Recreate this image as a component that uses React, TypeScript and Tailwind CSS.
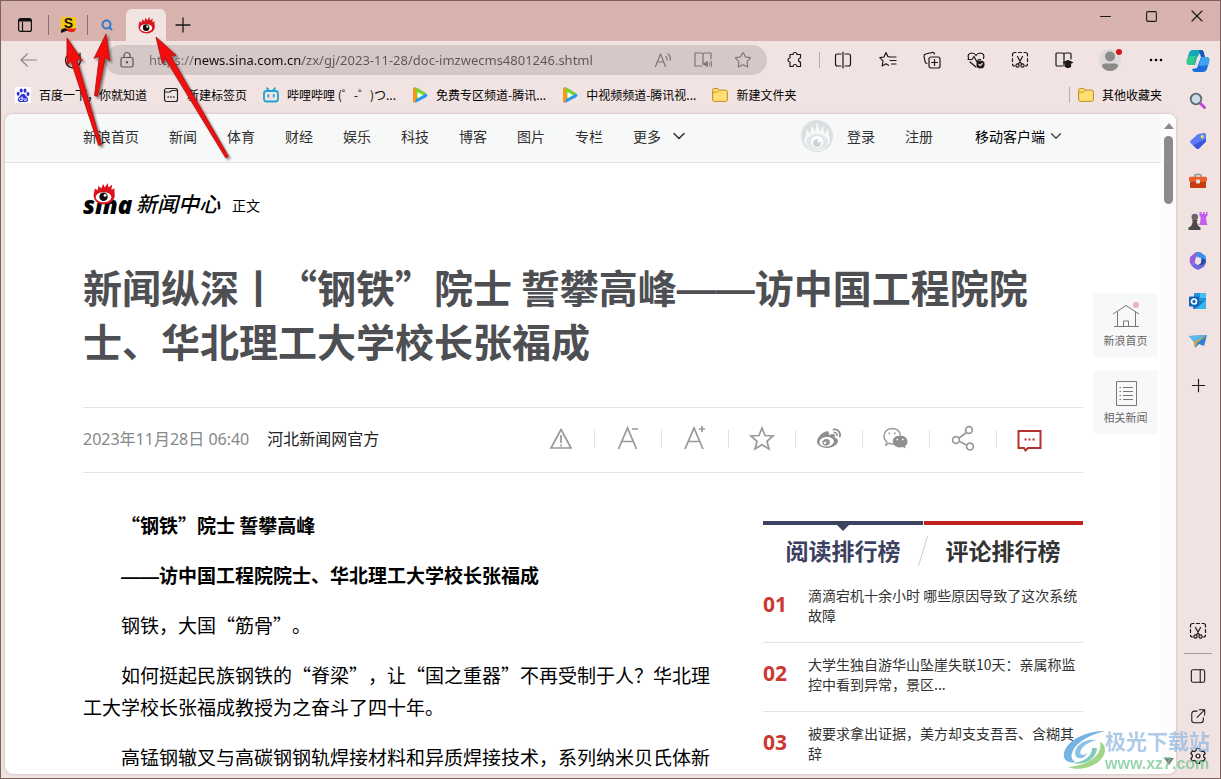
import type { ReactNode } from 'react';
import { ChevronDown, Minus, Plus, Search, Square, Star, X } from 'lucide-react';
import { FaWeibo } from 'react-icons/fa';

const NAV_ITEMS = ['新浪首页', '新闻', '体育', '财经', '娱乐', '科技', '博客', '图片', '专栏'];

const RANKING = [
  { no: '01', title: '滴滴宕机十余小时 哪些原因导致了这次系统故障' },
  { no: '02', title: '大学生独自游华山坠崖失联10天：亲属称监控中看到异常，景区...' },
  { no: '03', title: '被要求拿出证据，美方却支支吾吾、含糊其辞' },
];

const ARROWS = [
  { from: [99, 144], to: [66, 37] },
  { from: [95, 95], to: [105, 33] },
  { from: [226, 156], to: [155, 36] },
];

/* ---------- icons ---------- */

function LineIcon({ children, size = 18 }: { children: ReactNode; size?: number }) {
  return (
    <svg width={size} height={size} viewBox="0 0 18 18" fill="none" stroke="currentColor" strokeWidth="1.2" strokeLinecap="round" strokeLinejoin="round" className="shrink-0">
      {children}
    </svg>
  );
}

function SinaEye({ size = 18 }: { size?: number }) {
  return (
    <svg width={size} height={size} viewBox="0 0 24 24" className="shrink-0">
      <path d="M1 16C0 11 2 9 2 6L5 8L6 3L9 6L11 1L13 5L16 0L17 5L21 2L20 7L24 6C22 9 25 12 23 17C20 25 4 26 1 16Z" fill="#d9141e" />
      <ellipse cx="11.500" cy="15.500" rx="8.500" ry="5.600" fill="#fff" />
      <circle cx="11.500" cy="15" r="4.600" fill="#120c0c" />
      <circle cx="13.200" cy="13.500" r="1.600" fill="#fff" />
    </svg>
  );
}

function LockIcon() {
  return (
    <LineIcon>
      <rect x="3" y="6.500" width="12" height="9.500" rx="1.500" />
      <path d="M6 6.500V4.500a3 3 0 0 1 6 0v2" />
      <circle cx="9" cy="11.300" r="0.600" fill="currentColor" />
    </LineIcon>
  );
}

function ScreenshotIcon() {
  return (
    <LineIcon>
      <path d="M1.500 5V3.500a2 2 0 0 1 2-2H5M7.500 1.500h3M13 1.500h1.500a2 2 0 0 1 2 2V5M1.500 7.500v3M16.500 7.500v3M1.500 13a2 2 0 0 0 2 2M16.500 13a2 2 0 0 1-2 2" />
      <path d="M6.500 5.500 10.500 13M11.500 5.500 7.500 13" />
      <circle cx="6.500" cy="14.500" r="1.600" />
      <circle cx="11.500" cy="14.500" r="1.600" />
    </LineIcon>
  );
}

function FolderIcon() {
  return (
    <svg width="16" height="16" viewBox="0 0 16 16" className="shrink-0">
      <path d="M.6 3.500a2 2 0 0 1 2-2h3l1.800 1.600h6a2 2 0 0 1 2 2v7.300a2 2 0 0 1-2 2H2.600a2 2 0 0 1-2-2z" fill="#ffdf73" stroke="#b98a1c" />
      <path d="M.8 5.200h4.400l2-2" fill="none" stroke="#c99a26" />
    </svg>
  );
}

function VideoIcon() {
  return (
    <svg width="16" height="16" viewBox="0 0 16 16" className="shrink-0">
      <path d="M1 2C1 .5 3 0 5 1L14 6.500C16 8 16 9 14 10.200L5 15C3 16 1 15.500 1 14Z" fill="#2a97f0" />
      <path d="M1 2C1 .5 3 0 5 1L12 5.300 5.500 8 3 15.600C1.800 15.600 1 15 1 14Z" fill="#ff9416" />
      <path d="M3 .5Q4 .4 5 1L14 6.500 10 9 5 12 4 5Z" fill="#7bd52b" />
      <path d="M5.500 5 11 8.200 5.500 11.300Z" fill="#fff" />
    </svg>
  );
}

function BaiduIcon() {
  return (
    <svg width="16" height="16" viewBox="0 0 16 16" className="shrink-0">
      <rect width="16" height="16" rx="1" fill="#fff" />
      <g fill="#2c2fd8">
        <ellipse cx="3.200" cy="6.800" rx="1.500" ry="2" />
        <ellipse cx="6.200" cy="3.600" rx="1.500" ry="2.100" />
        <ellipse cx="10" cy="3.700" rx="1.500" ry="2.100" />
        <ellipse cx="13" cy="7" rx="1.500" ry="2" />
        <path d="M8 6.800c2 0 2.400 2 4 3.400 2 1.800 1.200 4.600-1 4.800H5c-2.400-.2-3-3-1-4.800C5.600 8.800 6 6.800 8 6.800Z" />
      </g>
      <path d="M7.200 9.500v4H5.600a1.200 1.200 0 0 1 0-2.500h1.600M9 11v1.500q0 1 1 1h1.200V11" fill="none" stroke="#fff" strokeWidth="0.900" />
    </svg>
  );
}

function BilibiliIcon() {
  return (
    <svg width="16" height="16" viewBox="0 0 16 16" fill="none" stroke="#22a3cf" strokeWidth="1.800" strokeLinecap="round" className="shrink-0">
      <rect x="1" y="4" width="14" height="10.500" rx="2.500" />
      <path d="M4 1.200 6 3.500M12 1.200 10 3.500M5.300 8v1.600M10.700 8v1.600" />
    </svg>
  );
}

function NewTabIcon() {
  return (
    <svg width="16" height="16" viewBox="0 0 16 16" fill="none" stroke="#222" strokeWidth="1.200" className="shrink-0">
      <rect x="1.500" y="1.500" width="13" height="13" rx="2" />
      <path d="M2 5h5l1.500-1.500H14" />
      <path d="M4.500 10h1.400M7.300 10h1.400M10.100 10h1.400" strokeWidth="1.400" />
    </svg>
  );
}

function CopilotIcon() {
  return (
    <svg width="24" height="24" viewBox="0 0 24 24" className="shrink-0">
      <path d="M7 1h8c2 0 2.600 1.500 3 3l-5 1-4 11H4c-3 0-4-2-3-5l2-7C3.700 2 5 1 7 1Z" fill="#15a7b5" />
      <path d="M1 11c.5-3 2-4 4-4h5L8 16H4c-3 0-4-2-3-5Z" fill="#35c98e" />
      <path d="M17 23H9c-2 0-2.600-1.500-3-3l5-1 4-11h5c3 0 4 2 3 5l-2 7c-.7 2-2 3-4 3Z" fill="#1d6fe0" />
      <path d="M15 8h5c3 0 4 2 3 5l-1 3c-2 0-5 1-9 1Z" fill="#3fa2ee" />
      <path d="M15 1c2 0 2.600 1.500 3 3l1 4h-4L13 1Z" fill="#1554b8" />
      <path d="m11 8 3-1-3 10H9Z" fill="#efe2e1" />
    </svg>
  );
}

function SideSearchIcon() {
  return (
    <svg width="18" height="18" viewBox="0 0 18 18" fill="none">
      <path d="m10.500 10.500 5 5" stroke="#bb4bdd" strokeWidth="3" strokeLinecap="round" />
      <circle cx="7" cy="7" r="5.300" fill="#c9dbe8" stroke="#616a73" strokeWidth="1.800" />
    </svg>
  );
}

function TagIcon() {
  return (
    <svg width="18" height="18" viewBox="0 0 18 18">
      <path d="M9 2 15.500 1Q17 1 17 3V9.500L10 16.500Q8.700 17.500 7.500 16.500L1.500 11Q.5 9.800 1.500 8.700Z" fill="#5b7cf5" />
      <path d="M17 7v2.500L10 16.500Q8.700 17.500 7.500 16.500L4 13.300Z" fill="#3c55dd" />
      <circle cx="13.300" cy="4.800" r="1.700" fill="#d9e26a" />
    </svg>
  );
}

function ToolboxIcon() {
  return (
    <svg width="18" height="18" viewBox="0 0 18 18">
      <path d="M6 5V3.500Q6 2.500 7 2.500h4q1 0 1 1V5" fill="none" stroke="#84909a" strokeWidth="1.400" />
      <rect x="1" y="8" width="16" height="8" rx="1" fill="#c53c11" />
      <rect x="0" y="4.800" width="18" height="5" rx="1.200" fill="#e8602b" />
      <rect x="7" y="7.500" width="4" height="4" rx="1" fill="#dfe3e6" />
    </svg>
  );
}

function ChessIcon() {
  return (
    <svg width="20" height="20" viewBox="0 0 20 20">
      <path d="M11.500 1h2v2h1.500V1h1.500v2H18V1h1.500v4l-1.500 1 .6 6 1 2h-9l1.500-2 .6-6-1.200-1Z" fill="#c45cf0" />
      <circle cx="6.800" cy="6" r="3.300" fill="#6a6668" />
      <path d="M4 9h5.500l-.8 2 1.600 4 2.200 1.500V19h-12v-2.500L3.200 15l1.600-4Z" fill="#4d494b" />
    </svg>
  );
}

function M365Icon() {
  return (
    <svg width="18" height="18" viewBox="0 0 18 18">
      <path d="M7 0 12 0 8 3 7 6 6 11 2 13Q0 11 1 5Z" fill="#9a5fe0" />
      <path d="M7 0h4l5 3.500Q18 6 16.500 11L13 13l-1-7-4-1Z" fill="#3f8fe8" />
      <path d="M2 13 6 11 9 13 16.500 9.500Q17 13 14 15.500L9 18Q5 17 2 13Z" fill="#7067dc" />
      <path d="m13 6 3.600 2v3L13 13 9 13l3-3Z" fill="#284ba4" />
      <path d="M6.500 6.500 9 5.500l3 1.500v4l-3 2-3-2Z" fill="#efe2e1" />
    </svg>
  );
}

function OutlookIcon() {
  return (
    <svg width="18" height="18" viewBox="0 0 18 18">
      <rect x="5" y="1" width="12" height="11" rx="1" fill="#2493df" />
      <path d="M11 1h6v5h-6Z" fill="#45bdf0" />
      <path d="m4 9 13 0v7q0 1-1 1H5q-1 0-1-1Z" fill="#1278c8" />
      <path d="M17 8v8q0 1-1 1H6Z" fill="#38b5ee" />
      <rect x="0" y="4.500" width="10" height="10" rx="1" fill="#0f64b8" />
      <circle cx="5" cy="9.500" r="2.500" fill="none" stroke="#fff" strokeWidth="1.700" />
    </svg>
  );
}

function PlaneIcon() {
  return (
    <svg width="18" height="18" viewBox="0 0 18 18">
      <path d="M0 4 18 3 15 14 10 12 6 16 5 10Z" fill="#2e83d8" />
      <path d="M0 4 18 3 5 10Z" fill="#5cb8ec" />
      <path d="M18 3 5 10 6 16 8 11Z" fill="#d8a928" />
    </svg>
  );
}

function WatermarkSwirl() {
  return (
    <svg width="42" height="40" viewBox="0 0 42 40" fill="none" className="shrink-0">
      <path d="M42 1C25 1 9 8 3 18C-3 28 4 34 13 32C7 30 7 23 13 16C19 9 30 4 42 1Z" fill="#3a93d6" />
      <path d="M33 10C22 8 12 16 12 23C12 30 22 30 24 23C19 27 16 24 18 20C21 14 28 12 33 10Z" fill="#5aa9dd" />
      <path d="M37 12C40 24 27 35 5 37C20 43 42 33 42 20C42 16 40 13 37 12Z" fill="#7cc35a" />
      <path d="M29 18C29 27 20 32 10 33C22 36 34 28 34 18Z" fill="#4fb5a2" />
    </svg>
  );
}

/* ---------- browser chrome ---------- */

function IconButton({ label, className = 'w-11', children }: { label: string; className?: string; children: ReactNode }) {
  return (
    <button type="button" aria-label={label} className={`flex shrink-0 items-center justify-center ${className}`}>
      {children}
    </button>
  );
}

function TitleBar() {
  return (
    <div className="flex h-10 shrink-0 bg-[#d8b2ac]">
      <div className="flex items-end">
        <IconButton label="Tab actions" className="h-8 w-[47px]">
          <svg width="14" height="14" viewBox="0 0 14 14" fill="none" stroke="#111" strokeWidth="1.200">
            <rect x="0.600" y="0.600" width="12.800" height="12.800" rx="2" />
            <path d="M1 3h12M4.500 4v9" />
            <path d="M1 2h12" strokeWidth="2" />
          </svg>
        </IconButton>
        <span className="mb-1.5 h-5 w-px bg-[#8d6b67]" />
        <button type="button" aria-label="Sogou" className="flex h-8 w-[38px] items-center justify-center">
          <svg width="17" height="18" viewBox="0 0 17 18">
            <rect x="1" y="1" width="15" height="14" fill="#f9c80e" />
            <text x="8.500" y="12" textAnchor="middle" fontSize="14" fontWeight="700" fontFamily="Liberation Sans, sans-serif" fill="#111">S</text>
            <path d="M1 14C4 11 8 12 9 15L6 15 1 17Z" fill="#111" />
            <path d="M6 13C10 11 12 14 16 12C16 17 9 18 6 13Z" fill="#e4231b" />
          </svg>
        </button>
        <span className="mb-1.5 h-5 w-px bg-[#8d6b67]" />
        <button type="button" aria-label="Search" className="flex h-8 w-[38px] items-center justify-center">
          <Search size={12} strokeWidth={4} color="#2e7bd0" />
        </button>
        <button type="button" aria-label="Sina" className="flex h-8 w-10 items-center justify-center rounded-t-md bg-[#f1e3e2]">
          <SinaEye size={17} />
        </button>
        <IconButton label="New tab" className="h-8 w-[34px]">
          <Plus size={24} strokeWidth={1.300} />
        </IconButton>
      </div>
      <div className="ml-auto flex h-[30px]">
        <IconButton label="Minimize" className="w-[46px]"><Minus size={17} strokeWidth={1.500} /></IconButton>
        <IconButton label="Maximize" className="w-[46px]"><Square size={13} strokeWidth={2} /></IconButton>
        <IconButton label="Close" className="w-[46px]"><X size={20} strokeWidth={1.400} /></IconButton>
      </div>
    </div>
  );
}

function AddressRow() {
  return (
    <div className="flex h-[38px] items-center">
      <IconButton label="Back" className="w-[54px]">
        <svg width="17" height="14" viewBox="0 0 17 14" fill="none" stroke="#8f8787" strokeWidth="1.200" strokeLinecap="round" strokeLinejoin="round">
          <path d="M16.500 7H1M7.500.8 1 7l6.500 6.200" />
        </svg>
      </IconButton>
      <IconButton label="Refresh" className="w-9">
        <LineIcon>
          <path d="M16 6.500A7.500 7.500 0 1 0 16.500 10M16 2v4.500h-4.500" />
        </LineIcon>
      </IconButton>
      <div className="ml-[14px] flex h-[30px] min-w-0 flex-1 items-center rounded-full bg-[#d6c8c7] text-[#7d7474]">
        <IconButton label="Site information" className="w-11 text-[#5e5656]"><LockIcon /></IconButton>
        <input
          type="text"
          aria-label="Address"
          defaultValue="https://news.sina.com.cn/zx/gj/2023-11-28/doc-imzwecms4801246.shtml"
          className="min-w-0 flex-1 bg-[linear-gradient(90deg,#6f6767_46px,#151010_46px,#151010_153px,#5d5555_153px)] bg-clip-text pt-0.5 font-['Noto_Sans'] text-[13px] text-transparent outline-none"
        />
        <IconButton label="Read aloud" className="w-10">
          <LineIcon>
            <path d="M1.500 15.500 6.500 3l5 12.500M3.300 11h6.400M12 5.500q1.500 1.500 1 3.500M14 3q3 2.500 2.200 6" />
          </LineIcon>
        </IconButton>
        <IconButton label="Immersive reader" className="w-10">
          <LineIcon>
            <path d="M9 3.500V13M9 3.500Q9 2 7.500 2H1v13h7M9 3.500Q9 2 10.500 2H17v6" />
            <path d="M10 12h1.500l2-2v6l-2-2H10ZM15.500 11.500q1 1.500 0 3M17 10q1.500 3 0 6" fill="currentColor" strokeWidth="0.800" />
          </LineIcon>
        </IconButton>
        <IconButton label="Add to favorites" className="mr-1 w-10"><Star size={18} strokeWidth={1.500} /></IconButton>
      </div>
      <div className="flex h-full items-center">
        <IconButton label="Extensions" className="w-[52px] pl-1">
          <LineIcon>
            <path d="M4 3.500h3a2 2 0 1 1 4 0h3.500V7a1.900 1.900 0 1 0 0 4v4.500H11a2 2 0 1 0-4 0H4V11a1.900 1.900 0 1 1 0-4Z" />
          </LineIcon>
        </IconButton>
        <span className="h-4 w-px bg-[#b9aeae]" />
        <IconButton label="Split screen" className="w-[46px]">
          <LineIcon>
            <path d="M7 3H3.500Q1.500 3 1.500 5v8q0 2 2 2H7M11 3h3.500q2 0 2 2v8q0 2-2 2H11M9 1v16" />
          </LineIcon>
        </IconButton>
        <IconButton label="Favorites">
          <LineIcon>
            <path d="M12 6 9 5.700 7 1.500 5 6 .8 6.600 4 9.800l-.8 5.200L7 12.800l2.500 1.500M12.500 6H17M11 9.500h6M12.500 13H17" />
          </LineIcon>
        </IconButton>
        <IconButton label="Collections">
          <LineIcon>
            <rect x="6" y="6" width="11" height="11" rx="2" />
            <path d="M11.500 8.500v6M8.500 11.500h6M4 12.500Q2.500 12.500 2 10.500L1 5.500Q.8 3.500 2.600 3L9 1.500q2-.3 2.600 1.500" />
          </LineIcon>
        </IconButton>
        <IconButton label="Browser essentials">
          <LineIcon>
            <path d="M1.500 7.500Q0 2.500 4.500 2 7.500 2 9 4.500 10.500 2 13.500 2 18 2.500 16.500 7.500M1 8.500h4l2-3 3 5.500 1.500-2.500h2M3 11l6 5" />
            <circle cx="13.500" cy="13.500" r="3.500" fill="currentColor" />
            <path d="m12 13.500 1.200 1.200 2-2.200" stroke="#f1e3e2" />
          </LineIcon>
        </IconButton>
        <IconButton label="Screenshot"><ScreenshotIcon /></IconButton>
        <IconButton label="Learning">
          <LineIcon>
            <path d="M9 3.500V15M9 3.500Q9 2 7.500 2H2Q1 2 1 3v11q0 1 1 1h5.500M9 3.500Q9 2 10.500 2H15q1 0 1 1v5" />
            <path d="m8.500 11.500 4.500-2 4.500 2-4.500 2ZM10.500 13v2.500q2.500 2 5 0V13" fill="currentColor" />
          </LineIcon>
        </IconButton>
        <IconButton label="Profile" className="w-[50px]">
          <svg width="26" height="26" viewBox="0 0 26 26">
            <circle cx="12" cy="13" r="11" fill="#dedada" />
            <circle cx="12" cy="9.500" r="5" fill="#8c8a89" />
            <path d="M4 19.500q0-3 3-3h10q3 0 3 3-3 4.500-8 4.500t-8-4.500Z" fill="#8c8a89" />
            <circle cx="21" cy="5" r="3" fill="#d8141c" />
          </svg>
        </IconButton>
        <IconButton label="Settings and more" className="w-10">
          <svg width="14" height="4" viewBox="0 0 14 4">
            <circle cx="2" cy="2" r="1.300" />
            <circle cx="7" cy="2" r="1.300" />
            <circle cx="12" cy="2" r="1.300" />
          </svg>
        </IconButton>
      </div>
    </div>
  );
}

function Bookmark({ icon, children }: { icon: ReactNode; children: ReactNode }) {
  return (
    <a href="#" className="flex shrink-0 items-center gap-2">
      {icon}
      {children}
    </a>
  );
}

function BookmarksBar() {
  return (
    <div className="flex h-[35px] items-center gap-4 pr-[14px] pb-1 pl-[14px] text-xs text-black">
      <Bookmark icon={<BaiduIcon />}>百度一下，你就知道</Bookmark>
      <Bookmark icon={<NewTabIcon />}>新建标签页</Bookmark>
      <Bookmark icon={<BilibiliIcon />}>哔哩哔哩 (゜-゜)つ...</Bookmark>
      <Bookmark icon={<VideoIcon />}>免费专区频道-腾讯...</Bookmark>
      <Bookmark icon={<VideoIcon />}>中视频频道-腾讯视...</Bookmark>
      <Bookmark icon={<FolderIcon />}>新建文件夹</Bookmark>
      <div className="ml-auto flex items-center gap-2">
        <span className="h-4 w-px bg-[#b9aeae]" />
        <Bookmark icon={<FolderIcon />}>其他收藏夹</Bookmark>
      </div>
    </div>
  );
}

function EdgeSidebar() {
  return (
    <aside className="flex w-11 shrink-0 flex-col items-center pb-0.5">
      <IconButton label="Copilot" className="h-10"><CopilotIcon /></IconButton>
      <IconButton label="Search" className="h-10"><SideSearchIcon /></IconButton>
      <IconButton label="Shopping" className="h-10"><TagIcon /></IconButton>
      <IconButton label="Tools" className="h-10"><ToolboxIcon /></IconButton>
      <IconButton label="Games" className="h-10"><ChessIcon /></IconButton>
      <IconButton label="Microsoft 365" className="h-10"><M365Icon /></IconButton>
      <IconButton label="Outlook" className="h-10"><OutlookIcon /></IconButton>
      <IconButton label="Drop" className="h-10"><PlaneIcon /></IconButton>
      <IconButton label="Customize" className="mt-1 h-10"><Plus size={21} strokeWidth={1.300} /></IconButton>
      <IconButton label="Screenshot" className="mt-auto h-10"><ScreenshotIcon /></IconButton>
      <span className="my-0.5 h-px w-7 bg-[#a99f9f]" />
      <IconButton label="Side panel" className="h-10">
        <LineIcon size={16}>
          <rect x="1.500" y="2" width="15" height="14" rx="2" />
          <path d="M11.500 2v14" />
        </LineIcon>
      </IconButton>
      <IconButton label="Open link" className="h-10">
        <LineIcon size={16}>
          <path d="M8 3.500H5q-3 0-3 3V14q0 2.500 3 2.500h7q3 0 3-3V11M10.500 2H16.500V8M16 2.500 8 10.500" />
        </LineIcon>
      </IconButton>
      <IconButton label="Settings" className="h-10">
        <LineIcon>
          <path d="M7.500 1.500h3l.5 2.200 1.600.9 2.100-.7 1.500 2.600-1.500 1.500v2l1.500 1.500-1.500 2.600-2.100-.7-1.600.9-.5 2.200h-3L7 14.300l-1.600-.9-2.100.7-1.500-2.600L3.300 10V8L1.800 6.500l1.500-2.600 2.100.7L7 3.700Z" />
          <circle cx="9" cy="9" r="2" />
        </LineIcon>
      </IconButton>
    </aside>
  );
}

/* ---------- news page ---------- */

function PageHeader() {
  return (
    <header className="border-b border-[#dfe1e2] bg-[#f7f8f8]">
      <div className="mx-auto flex h-12 max-w-[1000px] items-center pb-1 text-sm text-[#2f2f2f]">
        <nav className="flex gap-[30px]">
          {NAV_ITEMS.map(item => (
            <a key={item} href="#">{item}</a>
          ))}
          <button type="button" className="flex items-center gap-2">
            更多
            <ChevronDown size={20} strokeWidth={1.800} />
          </button>
        </nav>
        <div className="ml-auto flex items-center pr-[18px]">
          <svg width="32" height="32" viewBox="0 0 32 32" className="mr-3.5">
            <circle cx="16" cy="16" r="16" fill="#dcdfe1" />
            <path d="M3 22 6 9 9 14 11 5 14 12 16 2 19 12 22 5 23 14 27 9 29 22Q24 31 16 31T3 22Z" fill="#f7f8f8" />
            <ellipse cx="16" cy="22" rx="11" ry="8" fill="#e4e7e9" />
            <circle cx="16" cy="22" r="6" fill="#fff" />
            <circle cx="16" cy="23" r="4" fill="#cfd2d4" />
            <circle cx="18" cy="21" r="1.500" fill="#fff" />
          </svg>
          <a href="#">登录</a>
          <a href="#" className="ml-[30px]">注册</a>
          <button type="button" className="ml-[42px] flex items-center gap-0.5 text-black">
            移动客户端
            <ChevronDown size={18} strokeWidth={1.800} color="#444" />
          </button>
        </div>
      </div>
    </header>
  );
}

function SiteLogo() {
  return (
    <div className="mt-5 flex h-9 items-end text-black">
      <a href="#" className="flex items-end">
        <span className="relative w-[53px] font-['Open_Sans'] text-2xl leading-7 font-extrabold italic">
          sina
          <span className="absolute -top-2 left-2.5"><SinaEye size={22} /></span>
        </span>
        <span className="text-[21px] leading-8 font-medium italic">新闻中心</span>
      </a>
      <a href="#" className="ml-3 text-sm leading-7">正文</a>
    </div>
  );
}

function ShareIcon({ label, children }: { label: string; children: ReactNode }) {
  return (
    <button type="button" aria-label={label} className="flex h-[18px] w-[67px] items-center justify-center border-l border-[#e3e3e3] first:border-l-0">
      <svg width="28" height="28" viewBox="0 0 28 28" fill="none" stroke="#999" strokeWidth="1.700" className="shrink-0">
        {children}
      </svg>
    </button>
  );
}

function ArticleMeta() {
  return (
    <div className="mt-10 flex h-[66px] items-center border-y border-[#e3e3e3] pb-0.5 font-['Noto_Sans','Noto_Sans_CJK_SC',sans-serif] text-base">
      <time className="text-[#888]">2023年11月28日 06:40</time>
      <a href="#" className="ml-[18px] text-[#222]">河北新闻网官方</a>
      <div className="ml-auto flex items-center pr-5">
        <ShareIcon label="举报">
          <path d="M14 4.500 24 23H4ZM14 10v8M14 19.500v2" />
        </ShareIcon>
        <ShareIcon label="缩小字体">
          <path d="m4.500 24 9-21 9 21M7.500 16.500h12M18 4h6" />
        </ShareIcon>
        <ShareIcon label="放大字体">
          <path d="m4 24 9-21 9 21M7 16.500h12M18 4h6M21 1v6" />
        </ShareIcon>
        <ShareIcon label="收藏">
          <path d="m14 3 3 7.500 8 .5-6 5.300 2 7.700-7-4.300L7 24l2-7.700L3 11l8-.5Z" />
        </ShareIcon>
        <button type="button" aria-label="微博" className="flex h-[18px] w-[67px] items-center justify-center border-l border-[#e3e3e3] text-[#8f8f8f]">
          <FaWeibo size={24} className="shrink-0" />
        </button>
        <ShareIcon label="微信">
          <path d="M12 19q-2.500.4-5-.8L4 20l.8-3.300Q1.500 14 2 10.500 3 4 10 3.500q7 0 8.500 6.500" strokeWidth="1.400" />
          <path d="M18 10.500c4.500 0 7.500 2.800 7.500 6 0 2-1 3.500-2.500 4.600l.5 2.400-2.700-1.400c-5.800 1.400-10-1.500-10-5.600 0-3.200 2.800-6 7.200-6Z" fill="#8f8f8f" stroke="none" />
          <path d="M6.500 8.300h1.600M12 8.300h1.600" />
          <path d="M14.500 14.500H16M20 14.500h1.500" stroke="#fff" />
        </ShareIcon>
        <ShareIcon label="分享">
          <circle cx="20" cy="5" r="3.400" />
          <circle cx="7" cy="15" r="3.400" />
          <circle cx="21" cy="21.500" r="3.400" />
          <path d="m10 13 7.500-5.500M10.500 16.500l7 3.500" />
        </ShareIcon>
        <ShareIcon label="评论">
          <path d="M2.500 6h22v17H12l-2.500 2.500L8 23H2.500Z" stroke="#b4322d" strokeWidth="2" />
          <path d="M8.500 14.500h2M12.500 14.500h2M16.500 14.500h2" stroke="#b4322d" strokeWidth="2" />
        </ShareIcon>
      </div>
    </div>
  );
}

function Ranking() {
  return (
    <section className="mt-12 w-80 shrink-0">
      <div className="flex gap-px">
        <span className="flex h-1 flex-1 justify-center bg-[#3c4460]">
          <svg width="16" height="10" viewBox="0 0 16 10" className="shrink-0">
            <path d="M0 2h16L8 10Z" fill="#3c4460" />
          </svg>
        </span>
        <span className="h-1 flex-1 bg-[#be2320]" />
      </div>
      <div className="flex h-[49px] items-center pt-0.5 text-[23px] font-bold">
        <button type="button" className="flex-1 text-[#3c4163]">阅读排行榜</button>
        <svg width="10" height="30" viewBox="0 0 10 30" className="-mx-[5px]">
          <path d="M9.500 0 .5 30" stroke="#ccc" />
        </svg>
        <button type="button" className="flex-1 text-[#333]">评论排行榜</button>
      </div>
      <ol>
        {RANKING.map(item => (
          <li key={item.no} className="flex items-center border-b border-[#e3e3e3] pt-[11px] pb-[17px]">
            <span className="w-[45px] shrink-0 font-['Noto_Sans'] text-[21px] font-bold text-[#cb3931]">{item.no}</span>
            <a href="#" className="text-sm leading-5 text-[#333]">{item.title}</a>
          </li>
        ))}
      </ol>
    </section>
  );
}

function Dash() {
  return <span className="font-['Liberation_Sans'] leading-none">——</span>;
}

function Article() {
  return (
    <main className="mx-auto max-w-[1000px] [text-spacing-trim:space-all]">
      <SiteLogo />
      <h1 className="mt-10 text-[39px] leading-[54px] font-bold text-[#4d4f53]">
        新闻纵深丨“钢铁”院士 誓攀高峰<Dash />访中国工程院院士、华北理工大学校长张福成
      </h1>
      <ArticleMeta />
      <div className="flex justify-between">
        <div className="flex w-[630px] flex-col gap-[18px] pt-9 text-[19px] leading-8 text-black">
          <p className="indent-[2em] font-bold">“钢铁”院士 誓攀高峰</p>
          <p className="indent-[2em] font-bold"><Dash />访中国工程院院士、华北理工大学校长张福成</p>
          <p className="indent-[2em]">钢铁，大国“筋骨”。</p>
          <p className="indent-[2em]">如何挺起民族钢铁的“脊梁”，让“国之重器”不再受制于人？华北理工大学校长张福成教授为之奋斗了四十年。</p>
          <p className="indent-[2em]">高锰钢辙叉与高碳钢钢轨焊接材料和异质焊接技术，系列纳米贝氏体新</p>
        </div>
        <Ranking />
      </div>
    </main>
  );
}

function FloatingTile({ label, children }: { label: string; children: ReactNode }) {
  return (
    <a href="#" className="flex h-16 w-[65px] flex-col items-center justify-center gap-0.5 rounded-sm bg-[#f8f8fa] text-[11px] leading-4 text-[#666]">
      <svg width="28" height="28" viewBox="0 0 28 28" fill="none" stroke="#777" className="shrink-0">
        {children}
      </svg>
      {label}
    </a>
  );
}

function Scrollbar() {
  return (
    <div className="flex w-[15px] shrink-0 flex-col items-center bg-[#fcfcfc] pt-2">
      <svg width="10" height="8" viewBox="0 0 10 8"><path d="M5 1 10 7H0Z" fill="#8a8a8a" /></svg>
      <span className="mt-1.5 h-[68px] w-[9px] rounded-full bg-[#8b8b8b]" />
      <svg width="10" height="8" viewBox="0 0 10 8" className="mt-auto mb-2"><path d="M0 0H10L5 7Z" fill="#7a7a7a" /></svg>
    </div>
  );
}

/* ---------- annotations ---------- */

function Arrow({ from, to }: { from: number[]; to: number[] }) {
  const length = Math.hypot(to[0] - from[0], to[1] - from[1]);
  const angle = (Math.atan2(to[1] - from[1], to[0] - from[0]) * 180) / Math.PI;
  const neck = length - 23;
  const d = `M0 -1.500 L${neck} -3 L${neck - 3} -8 L${length} 0 L${neck - 3} 8 L${neck} 3 L0 1.500Z`;
  return <path d={d} transform={`translate(${from[0]} ${from[1]}) rotate(${angle})`} fill="#f30d0d" stroke="#b31313" strokeWidth="0.800" />;
}

export default function App() {
  return (
    <div className="relative flex h-screen flex-col overflow-hidden border border-[#7b605e] bg-[#f1e3e2] font-['Noto_Sans_CJK_SC',sans-serif] text-[#1b1818]">
      <TitleBar />
      <div className="flex min-h-0 flex-1">
        <div className="flex min-w-0 flex-1 flex-col">
          <AddressRow />
          <BookmarksBar />
          <div className="mb-1 ml-1 flex min-h-0 flex-1 overflow-hidden rounded-lg bg-white shadow-[0_0_3px_rgba(80,50,50,0.3)]">
            <div className="relative min-w-0 flex-1 overflow-hidden">
              <PageHeader />
              <Article />
              <div className="absolute top-[179px] right-[3px] flex flex-col gap-[13px]">
                <FloatingTile label="新浪首页">
                  <path d="M1 12 14 3.500 27 12M5.500 9.500V24M23.500 9.500V24M2 24.500h25M11.500 24v-5h5v5" />
                  <circle cx="24" cy="3" r="3" fill="#eab4b4" stroke="none" />
                </FloatingTile>
                <FloatingTile label="相关新闻">
                  <path d="M4.500 2.500h20v24h-20ZM11 8.500h10M11 12.500h10M11 16.500h10M11 20.500h10M7.500 8.500h1.500M7.500 12.500h1.500M7.500 16.500h1.500M7.500 20.500h1.500" />
                </FloatingTile>
              </div>
            </div>
            <Scrollbar />
          </div>
        </div>
        <EdgeSidebar />
      </div>

      <svg width="240" height="170" className="pointer-events-none absolute top-0 left-0 drop-shadow-[2px_2px_1px_rgba(0,0,0,0.45)]">
        {ARROWS.map(arrow => (
          <Arrow key={arrow.to.join()} from={arrow.from} to={arrow.to} />
        ))}
      </svg>

      <div className="pointer-events-none absolute right-2.5 bottom-1 flex items-center opacity-70">
        <WatermarkSwirl />
        <div className="flex flex-col">
          <span className="text-[21px] leading-7 font-bold text-[#8db6e2]">极光下载站</span>
          <span className="font-['Liberation_Sans'] text-base leading-5 font-bold text-[#6fc48d]">www.xz7.com</span>
        </div>
      </div>
    </div>
  );
}
